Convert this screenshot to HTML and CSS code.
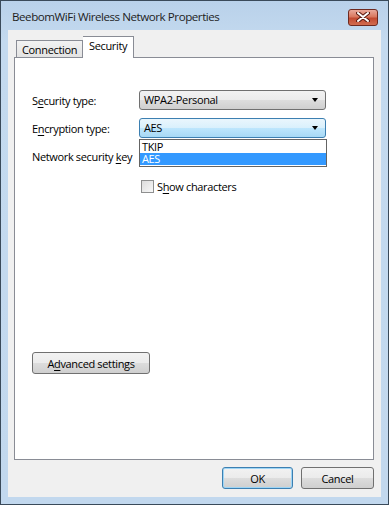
FILE: index.html
```html
<!DOCTYPE html>
<html lang="en">

<head>
    <meta charset="utf-8" />
    <title>BeebomWiFi Wireless Network Properties</title>
    <link rel="stylesheet" href="styles.css">
</head>

<body>
    <div class="window">
        <div class="titlebar">
            <span class="title">BeebomWiFi Wireless Network Properties</span>
            <button class="close">
                <svg width="14" height="10" viewBox="0 0 14 10">
                    <path d="M2 1 L12 9 M12 1 L2 9" stroke="#5a1b12" stroke-width="4" stroke-linecap="round" />
                    <path d="M2 1 L12 9 M12 1 L2 9" stroke="#ffffff" stroke-width="2" stroke-linecap="round" />
                </svg>
            </button>
        </div>
        <div class="client">
            <div class="tabs">
                <div class="tab">Connection</div>
                <div class="tab active">Security</div>
            </div>
            <div class="panel">
                <div class="form">
                    <label class="label">S<u>e</u>curity type:</label>
                    <div class="combo">WPA2-Personal<span class="arrow"></span></div>

                    <label class="label">E<u>n</u>cryption type:</label>
                    <div class="combo-wrap">
                        <div class="combo focus">AES<span class="arrow"></span></div>
                        <ul class="droplist">
                            <li>TKIP</li>
                            <li class="picked">AES</li>
                        </ul>
                    </div>

                    <label class="label">Network security <u>k</u>ey</label>
                    <div class="keyfield"></div>

                    <span></span>
                    <div class="check-row">
                        <span class="checkbox"></span>
                        <span>S<u>h</u>ow characters</span>
                    </div>
                </div>
                <button class="btn advanced">A<u>d</u>vanced settings</button>
            </div>
            <div class="actions">
                <button class="btn default">OK</button>
                <button class="btn">Cancel</button>
            </div>
        </div>
    </div>
</body>

</html>
```

FILE: styles.css
```css
body {
    margin: 0;
    background-color: #2b2b2b;
    font-family: "Open Sans", sans-serif;
    font-size: 11px;
    letter-spacing: -0.35px;
    color: #000;
}

.window {
    width: 387px;
    height: 503px;
    border: 1px solid #3a4a5a;
    background: linear-gradient(to bottom, #b9d1ea 0, #c4daef 40px, #c2d8ee 100%);
    display: flex;
    flex-direction: column;
}

.titlebar {
    height: 29px;
    display: flex;
    align-items: center;
    justify-content: space-between;
    padding: 0 10px 0 11px;
}

.title {
    font-size: 11.6px;
    letter-spacing: -0.45px;
    color: #1e1e1e;
    margin-top: 2px;
}

.close {
    width: 30px;
    height: 17px;
    margin-top: 3px;
    border: 1px solid #6e2a20;
    border-radius: 3px;
    background: linear-gradient(to bottom, #e9a99b 0, #d9785f 45%, #c24a31 55%, #d26d50 100%);
    padding: 0;
    display: flex;
    align-items: center;
    justify-content: center;
}

.client {
    margin: 0 7px;
    height: 467px;
    background-color: #f0f0f0;
    display: flex;
    flex-direction: column;
    padding: 7px 7px 0 6px;
    box-sizing: border-box;
}

.tabs {
    display: flex;
    padding-left: 2px;
    height: 20px;
    align-items: flex-end;
    position: relative;
    z-index: 1;
}

.tab {
    border: 1px solid #898c95;
    border-bottom: none;
    background: linear-gradient(to bottom, #f2f2f2, #e3e3e3);
    padding: 0 5px;
    height: 16px;
    line-height: 17px;
}

.tab.active {
    background: #ffffff;
    height: 21px;
    line-height: 18px;
    padding: 0 6px;
    margin-bottom: -1px;
    border-left: none;
}

.panel {
    height: 403px;
    box-sizing: border-box;
    border: 1px solid #898c95;
    background-color: #ffffff;
    padding: 32px 17px 0 17px;
    display: flex;
    flex-direction: column;
    align-items: flex-start;
}

.form {
    display: grid;
    grid-template-columns: 107px 187px;
    grid-auto-rows: 20px;
    row-gap: 8px;
    align-items: center;
}

.label {
    white-space: nowrap;
}

.label u,
.check-row u,
.btn u {
    text-decoration-thickness: 1px;
    text-underline-offset: 2px;
}

.combo-wrap {
    position: relative;
    height: 20px;
}

.combo {
    height: 20px;
    box-sizing: border-box;
    border: 1px solid #707070;
    border-radius: 3px;
    background: linear-gradient(to bottom, #f2f2f2 0, #ebebeb 50%, #dddddd 50%, #cfcfcf 100%);
    padding-left: 4px;
    line-height: 18px;
    position: relative;
}

.combo.focus {
    border-color: #3c7fb1;
    background: linear-gradient(to bottom, #eaf6fd 0, #d9f0fc 50%, #bee6fd 50%, #a7d9f5 100%);
}

.arrow {
    position: absolute;
    right: 7px;
    top: 7px;
    width: 0;
    height: 0;
    border-left: 3.5px solid transparent;
    border-right: 3.5px solid transparent;
    border-top: 4px solid #000;
}

.droplist {
    position: absolute;
    left: 0;
    top: 21px;
    width: 188px;
    box-sizing: border-box;
    margin: 0;
    padding: 1px 0;
    list-style: none;
    border: 1px solid #646464;
    background: #ffffff;
    z-index: 2;
}

.droplist li {
    height: 12px;
    line-height: 12px;
    padding-left: 2px;
}

.droplist li.picked {
    background-color: #3399ff;
    color: #ffffff;
}

.check-row {
    display: flex;
    align-items: center;
    gap: 3px;
    margin-top: 4px;
    padding-left: 2px;
}

.checkbox {
    width: 11px;
    height: 11px;
    border: 1px solid #8e8f8f;
    background: linear-gradient(135deg, #dcdcdc, #f8f8f8);
}

.btn {
    font-family: inherit;
    font-size: 11px;
    letter-spacing: -0.35px;
    height: 22px;
    box-sizing: border-box;
    border: 1px solid #707070;
    border-radius: 3px;
    background: linear-gradient(to bottom, #f2f2f2 0, #ebebeb 50%, #dddddd 50%, #cfcfcf 100%);
    padding: 0;
    color: #000;
}

.advanced {
    width: 118px;
    margin-top: 158px;
}

.actions {
    display: flex;
    justify-content: flex-end;
    gap: 8px;
    padding-top: 7px;
}

.actions .btn {
    width: 73px;
}

.actions .btn.default {
    width: 71px;
    border-color: #3c7fb1;
    box-shadow: inset 0 0 0 1px #9ed5f5;
}
```
